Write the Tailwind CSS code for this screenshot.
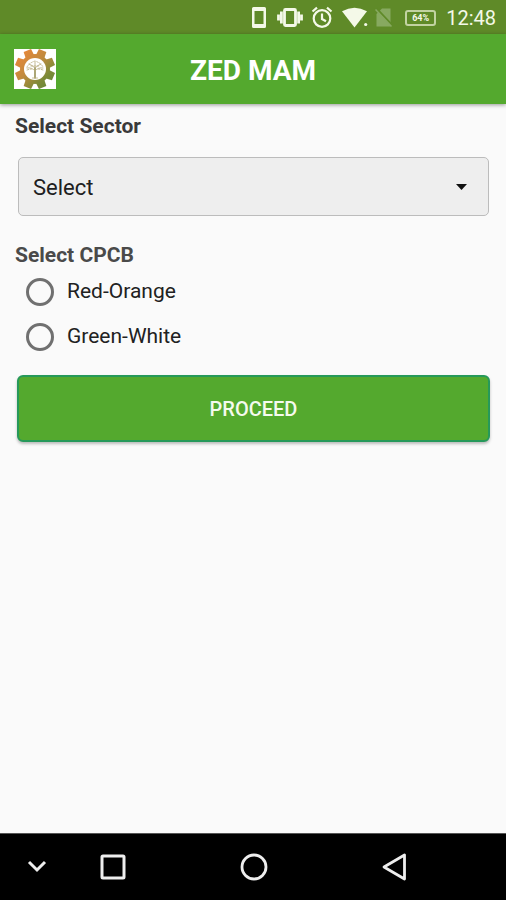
<!DOCTYPE html>
<html lang="en">
<head>
<meta charset="utf-8">
<meta name="viewport" content="width=device-width, initial-scale=1">
<title>ZED MAM</title>
<script src="https://cdn.jsdelivr.net/npm/@tailwindcss/browser@4"></script>
</head>
<body class="flex min-h-screen flex-col bg-[#fafafa] font-['Roboto',sans-serif] text-[#212121]">
  <div class="flex h-[34px] items-center justify-end bg-[#5f8a28] pr-[10px] pt-[2px] text-[#f4f9e8]">
    <svg class="mr-[10px] h-6 w-4" viewBox="0 0 16 24" role="img" aria-label="Phone"><path fill="currentColor" fill-rule="evenodd" d="M2.500 1h11a1.500 1.500 0 0 1 1.500 1.500v18a1.500 1.500 0 0 1-1.500 1.500h-11A1.500 1.500 0 0 1 1 20.500v-18A1.500 1.500 0 0 1 2.500 1ZM3.500 5v13h9V5Z"/></svg>
    <svg class="mr-2 h-6 w-[26px]" viewBox="0 0 26 24" role="img" aria-label="Vibrate" fill="none" stroke="currentColor"><rect x="7.500" y="3.500" width="11" height="16" rx="1" stroke-width="2.800"/><path stroke-width="2.800" d="M4.400 5.500v12M21.600 5.500v12M1.500 8.500v6M24.500 8.500v6"/></svg>
    <svg class="mr-[9px] h-6 w-[22px]" viewBox="0 0 22 24" role="img" aria-label="Alarm" fill="none" stroke="currentColor" stroke-width="2.200"><circle cx="11" cy="12.500" r="8.300"/><path d="M11 7.500v5.500l4 2.300M1.500 5.500 6 1.700M20.500 5.500 16 1.700"/></svg>
    <svg class="mr-[7px] h-6 w-[26px]" viewBox="0 0 26 24" role="img" aria-label="Wi-Fi" fill="currentColor"><path d="M0 5.300Q12.500-2 25 5.300L12.500 21.500Z"/><circle cx="23.700" cy="18.500" r="1.600"/></svg>
    <svg class="mr-[12px] h-6 w-[18px] text-[#87a960]" viewBox="0 0 18 24" role="img" aria-label="No SIM"><path fill="currentColor" d="M7 2.500h8.500v18h-14V8Z"/><path stroke="#5f8a28" stroke-width="2" d="M1.500 2.500 17.500 19.500"/><path stroke="currentColor" stroke-width="1.500" d="M.5 3.500 16.500 20.500"/></svg>
    <div class="mr-[10px] flex h-4 w-[31px] items-center justify-center rounded-[3px] border-2 border-[#c2d3a2] text-[9px] font-bold leading-none">64%</div>
    <time class="text-[20px] leading-6">12:48</time>
  </div>

  <header class="z-10 grid h-[70px] grid-cols-[42px_1fr_42px] items-center bg-[#54a92e] px-[14px] shadow-[0_1px_4px_rgba(0,0,0,0.4)]">
    <svg class="h-10 w-[42px] bg-white" viewBox="0 0 42 40" role="img" aria-label="ZED logo">
      <defs>
        <linearGradient id="tone" x1="0" y1="0" x2="1" y2="1"><stop offset=".15" stop-color="#e5883a"/><stop offset=".45" stop-color="#c08a3e"/><stop offset=".72" stop-color="#7d8a38"/><stop offset="1" stop-color="#5c8436"/></linearGradient>
        <mask id="gear" maskUnits="userSpaceOnUse" x="0" y="0" width="42" height="40">
          <g fill="#fff" transform="translate(21 20)">
            <circle r="15"/>
            <g transform="rotate(22.500)"><path id="tooth" d="M-4.500-13-4-20h8L4.500-13ZM-4.500 13-4 20h8L4.500 13Z"/><use href="#tooth" transform="rotate(45)"/><use href="#tooth" transform="rotate(90)"/><use href="#tooth" transform="rotate(135)"/></g>
            <circle r="11" fill="#000"/>
          </g>
        </mask>
      </defs>
      <rect width="42" height="40" fill="url(#tone)" mask="url(#gear)"/>
      <g fill="none" stroke="#b5a878" stroke-width=".8" stroke-linecap="round"><path stroke="#8f8848" stroke-width="1.500" d="M21 19v10"/><path d="M21 22q-3-4-8-3M21 22q3-4 8-3M21 19q-3-3-6-4M21 19q3-3 6-4M21 18v-5M18.500 29h5"/><path stroke-dasharray="1.500 1.500" d="M13 18q2-4 8-6 6 2 8 6M13 21q3-1 5-1M29 21q-3-1-5-1M17 17h8"/></g>
    </svg>
    <h1 class="pt-[3px] text-center text-[28px] font-bold leading-8 text-white">ZED MAM</h1>
  </header>

  <main class="flex-1 px-[15px] pt-2">
    <form>
      <label for="sector" class="block text-[21px] font-bold leading-7 text-[#3a3a3a]">Select Sector</label>
      <div class="relative ml-[3px] mr-[2px] mt-[17px]">
        <select id="sector" class="block h-[59px] w-full appearance-none rounded-[5px] border border-[#bcbcbc] bg-[#eeeeee] px-[14px] pt-[2px] text-[22px] text-[#202020]"><option>Select</option></select>
        <svg class="pointer-events-none absolute right-[22px] top-[27px] h-[6px] w-[11px]" viewBox="0 0 11 6" aria-hidden="true"><path fill="#111" d="M0 0h11L5.500 6Z"/></svg>
      </div>
      <fieldset class="mt-[25px]">
        <legend class="text-[21px] font-bold leading-7 text-[#4a4a4a]">Select CPCB</legend>
        <label class="ml-[11px] flex h-[45px] w-fit items-center gap-[13px] text-[21px]"><input type="radio" name="cpcb" class="size-7 appearance-none rounded-full border-[3px] border-[#707070] checked:border-8">Red-Orange</label>
        <label class="ml-[11px] flex h-[45px] w-fit items-center gap-[13px] text-[21px]"><input type="radio" name="cpcb" class="size-7 appearance-none rounded-full border-[3px] border-[#707070] checked:border-8">Green-White</label>
      </fieldset>
      <div class="ml-[2px] mr-px mt-4">
        <button type="button" class="h-[67px] w-full rounded-[6px] border-2 border-[#26995a] bg-[#54a92e] text-[20px] font-medium text-[#f4faee] shadow-[0_2px_3px_rgba(0,0,0,0.25)]">PROCEED</button>
      </div>
    </form>
  </main>

  <nav aria-label="System" class="grid h-[67px] grid-cols-[74px_78px_1fr_78px_73px] place-items-center border-t border-[#555] bg-black text-[#eeeeee]">
    <button type="button" aria-label="Hide"><svg class="size-7" viewBox="0 0 28 28" fill="none" stroke="currentColor" stroke-width="3"><path d="m6 9 8 8 8-8"/></svg></button>
    <button type="button" aria-label="Recent apps"><svg class="size-7" viewBox="0 0 28 28" fill="none" stroke="currentColor" stroke-width="3"><rect x="3" y="3" width="22" height="22" rx="1"/></svg></button>
    <button type="button" aria-label="Home"><svg class="size-7" viewBox="0 0 28 28" fill="none" stroke="currentColor" stroke-width="2.800"><circle cx="14" cy="14" r="12"/></svg></button>
    <button type="button" aria-label="Back"><svg class="size-7" viewBox="0 0 28 28" fill="none" stroke="currentColor" stroke-width="2.800" stroke-linejoin="round"><path d="M24.500 2v24L4 14Z"/></svg></button>
  </nav>
</body>
</html>
